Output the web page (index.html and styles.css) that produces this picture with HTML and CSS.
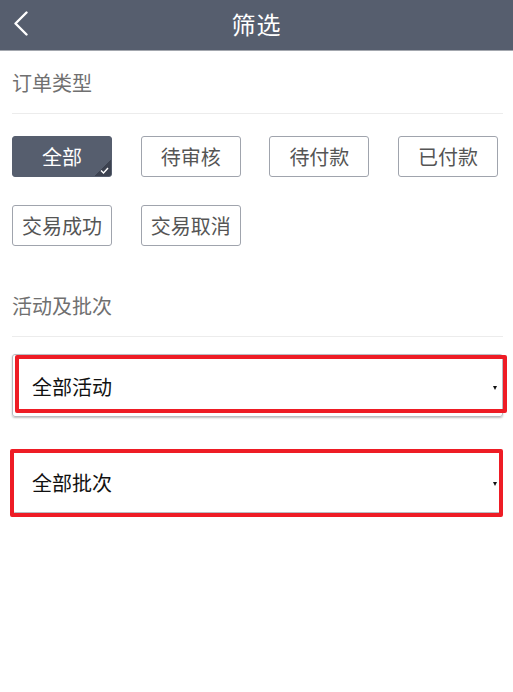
FILE: index.html
```html
<!DOCTYPE html>
<html lang="zh">
<head>
<meta charset="utf-8">
<title>筛选</title>
<link rel="stylesheet" href="styles.css">
</head>
<body>
<header class="topbar">
  <span class="back">
    <svg width="16" height="26" viewBox="0 0 16 26"><path d="M13.5 1.5 L2.5 12.5 L13.5 23.5" fill="none" stroke="#fff" stroke-width="2.4" stroke-linecap="round" stroke-linejoin="round"/></svg>
  </span>
  <h1 class="title">筛选</h1>
</header>
<main class="content">
  <div class="sec-title first">订单类型</div>
  <div class="chips">
    <span class="chip active">全部<span class="corner"><svg width="9" height="7" viewBox="0 0 9 7"><path d="M1 3.5 L3.5 6 L8 1" fill="none" stroke="#fff" stroke-width="1.4"/></svg></span></span>
    <span class="chip">待审核</span>
    <span class="chip">待付款</span>
    <span class="chip">已付款</span>
    <span class="chip">交易成功</span>
    <span class="chip">交易取消</span>
  </div>
  <div class="sec-title second">活动及批次</div>
  <div class="field one">
    <div class="select shadowed">全部活动<span class="arrow"></span></div>
    <span class="mark mark-one"></span>
  </div>
  <div class="field two">
    <div class="select">全部批次<span class="arrow"></span></div>
    <span class="mark mark-two"></span>
  </div>
</main>
</body>
</html>
```
FILE: styles.css
```css
* { box-sizing: border-box; }
html, body { margin: 0; padding: 0; background: #fff; }
body {
  font-family: "Noto Sans CJK SC", "Noto Sans", sans-serif;
  width: 513px;
  height: 692px;
  overflow: hidden;
}
.topbar {
  height: 51px;
  background: #565e6e;
  border-bottom: 1px solid #a3a7ae;
  display: flex;
  align-items: center;
  justify-content: center;
  position: relative;
}
.back {
  position: absolute;
  left: 13px;
  top: 11px;
  width: 16px;
  height: 26px;
  display: block;
}
.back svg { display: block; }
.title {
  margin: 0;
  color: #fff;
  font-size: 24px;
  font-weight: 400;
  line-height: 50px;
  letter-spacing: 1px;
  margin-top: -2px;
}
.content {
  padding: 0 10px 0 12px;
}
.sec-title {
  color: #707070;
  font-size: 20px;
  line-height: 24px;
  border-bottom: 1px solid #ececec;
}
.sec-title.first { padding: 20px 0 18px; }
.sec-title.second { padding: 48px 0 18px; }
.chips {
  display: grid;
  grid-template-columns: repeat(4, 100px);
  column-gap: 28.7px;
  row-gap: 28px;
  padding-top: 22px;
}
.chip {
  height: 41px;
  border: 1px solid #a0a4ad;
  border-radius: 3px;
  display: flex;
  align-items: center;
  justify-content: center;
  font-size: 20px;
  color: #555;
  position: relative;
  overflow: hidden;
}
.chip.active {
  background: #565e6e;
  border-color: #565e6e;
  color: #fff;
}
.corner {
  position: absolute;
  right: 0;
  bottom: 0;
  width: 16px;
  height: 16px;
  background: linear-gradient(135deg, transparent 50%, #3c4250 50%);
}
.corner svg {
  position: absolute;
  right: 2px;
  bottom: 2px;
}
.field {
  position: relative;
}
.field.one { margin-top: 17px; }
.field.two { margin-top: 33px; }
.select {
  height: 63px;
  width: 491px;
  border: 1px solid #b9bcc2;
  border-radius: 3px;
  display: flex;
  align-items: center;
  padding-left: 19px;
  padding-top: 2px;
  font-size: 20px;
  color: #111;
  position: relative;
}
.select.shadowed { box-shadow: 0 1px 2px rgba(0,0,0,0.25); }
.arrow {
  position: absolute;
  right: 5px;
  top: 31px;
  width: 0;
  height: 0;
  border-left: 2px solid transparent;
  border-right: 2px solid transparent;
  border-top: 4px solid #111;
}
.mark {
  position: absolute;
  border: 4px solid #ee1c25;
  border-radius: 2px;
  pointer-events: none;
}
.mark-one { left: 3px; right: -4px; top: 1px; height: 58px; }
.mark-two { left: -2px; right: 0; top: -1px; height: 68px; }
```
